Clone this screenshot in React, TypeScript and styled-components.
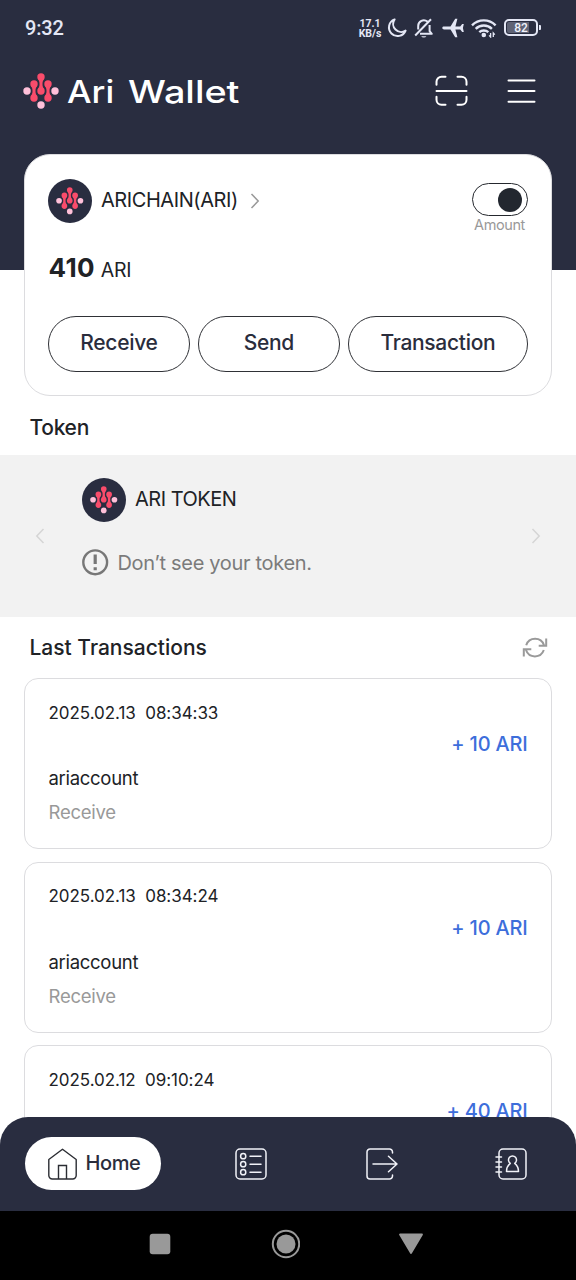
import React from 'react';
import styled, { createGlobalStyle } from 'styled-components';

const GlobalStyle = createGlobalStyle`
  * { box-sizing: border-box; }
  body { margin: 0; background: #fff; font-family: Inter, 'Liberation Sans', sans-serif; color: #202226; }
  svg { display: block; flex: none; }
`;

const navy = '#292d40';

const Screen = styled.div`
  width: 576px;
  height: 1280px;
  display: flex;
  flex-direction: column;
  overflow: hidden;
  background: #fff;
`;

const Label = styled.span<{ $size: number; $track?: number; $weight?: number; $color?: string; $lh?: number }>`
  display: block;
  white-space: pre;
  font-size: ${(p) => p.$size}px;
  line-height: ${(p) => p.$lh ?? 24}px;
  letter-spacing: ${(p) => p.$track ?? 0}px;
  font-weight: ${(p) => p.$weight ?? 400};
  color: ${(p) => p.$color ?? '#202226'};
`;

const Header = styled.header`
  flex: none;
  height: 270px;
  background: ${navy};
`;

const StatusBar = styled.div`
  height: 56px;
  padding: 0 38px 0 25px;
  display: flex;
  align-items: center;
  justify-content: space-between;
`;

const Clock = styled.span`
  font: 500 20px/24px Roboto, sans-serif;
  letter-spacing: -0.2px;
  color: #e4e7f5;
`;

const NetSpeed = styled.div`
  font: 700 10.5px/10px Roboto, sans-serif;
  color: #e4e7f5;
  width: 22px;
  white-space: nowrap;
  display: flex;
  flex-direction: column;
  align-items: center;
  padding-top: 1px;
`;

const StatusIcons = styled.div`
  display: flex;
  align-items: center;
  color: #e4e7f5;
`;

const Battery = styled.div`
  margin-left: 7px;
  width: 34px;
  height: 17px;
  border: 2px solid #e4e7f5;
  border-radius: 5px;
  padding: 1px;
  display: flex;
  position: relative;
  top: -1px;
  &::after {
    content: '';
    position: absolute;
    right: -5px;
    top: 4px;
    width: 2px;
    height: 5px;
    border-radius: 0 1px 1px 0;
    background: #e4e7f5;
  }
`;

const BatteryLevel = styled.div`
  flex: 1;
  background: linear-gradient(90deg, #5f6375 78%, transparent 78%);
  border-radius: 2px;
  font: 500 12px/12px Roboto, sans-serif;
  color: #f0f2fb;
  text-align: center;
`;

const Brand = styled.div`
  height: 70px;
  padding: 0 40px 0 23px;
  display: flex;
  align-items: center;
`;

const Wordmark = styled.h1`
  margin: 1px 0 0 8px;
  display: flex;
  font-size: 31.5px;
  line-height: 40px;
  font-weight: 500;
  color: #fff;
`;

const WordmarkPart = styled.span<{ $width: number; $stretch: number }>`
  width: ${(p) => p.$width}px;
  white-space: pre;
  transform: scaleX(${(p) => p.$stretch});
  transform-origin: left;
`;

const HeaderActions = styled.div`
  margin-left: auto;
  display: flex;
  align-items: center;
  gap: 39px;
`;

const AccountCard = styled.section`
  flex: none;
  position: relative;
  margin: -116px 24px 0;
  height: 242px;
  padding: 24px 23.500px 0;
  border: 1.4px solid #dcdcdf;
  border-radius: 26px;
  background: #fff;
`;

const AccountRow = styled.div`
  display: flex;
  height: 60px;
  align-items: flex-start;
`;

const AccountName = styled.div`
  display: flex;
  align-items: center;
  height: 44px;
  margin-left: -0.6px;
`;

const AccountTitle = styled.div`
  margin: 0 12px 2px 9px;
`;

const Coin = styled.div`
  width: 44px;
  height: 44px;
  border-radius: 50%;
  background: ${navy};
  display: flex;
  align-items: center;
  justify-content: center;
`;

const ToggleColumn = styled.div`
  margin: 4px 0 0 auto;
  width: 56px;
  display: flex;
  flex-direction: column;
  align-items: center;
`;

const Toggle = styled.div`
  width: 56px;
  height: 33px;
  border: 1.5px solid #25282e;
  border-radius: 17px;
  display: flex;
  align-items: center;
  justify-content: flex-end;
  padding-right: 4.5px;
  &::after {
    content: '';
    width: 24px;
    height: 24px;
    border-radius: 50%;
    background: #22272f;
  }
`;

const Balance = styled.div`
  height: 40px;
  margin-top: 9px;
  display: flex;
  align-items: baseline;
  gap: 6px;
`;

const Actions = styled.div`
  margin: 28px 0 0 -0.6px;
  display: grid;
  grid-template-columns: 142px 142px 180px;
  gap: 8px;
`;

const PillButton = styled.button`
  height: 55.5px;
  padding: 0 0 1.5px;
  border: 1.5px solid #2f3136;
  border-radius: 28px;
  background: #fff;
  display: flex;
  align-items: center;
  justify-content: center;
  font-family: inherit;
`;

const SectionHead = styled.div<{ $height: number; $top: number }>`
  flex: none;
  height: ${(p) => p.$height}px;
  padding: ${(p) => p.$top}px 28px 0 29.5px;
  display: flex;
  align-items: center;
  justify-content: space-between;
`;

const TokenBand = styled.section`
  flex: none;
  height: 162px;
  background: #f2f2f2;
  padding: 0 35px;
  display: flex;
  align-items: center;
`;

const TokenBody = styled.div`
  flex: 1;
  align-self: stretch;
  padding: 23px 0 0 37px;
`;

const TokenName = styled.div`
  padding-bottom: 2px;
`;

const TokenRow = styled.div<{ $gap: number; $mt?: number }>`
  display: flex;
  align-items: center;
  gap: ${(p) => p.$gap}px;
  margin-top: ${(p) => p.$mt ?? 0}px;
`;

const TxViewport = styled.div`
  flex: 1;
  min-height: 0;
  overflow: hidden;
  display: flex;
`;

const TxList = styled.div`
  flex: 1;
  min-height: 0;
  padding: 0 24px;
  display: flex;
  flex-direction: column;
  gap: 12.6px;
`;

const TxCard = styled.article`
  flex: none;
  height: 171px;
  padding: 21.700px 23.500px 0;
  border: 1.4px solid #dcdcdf;
  border-radius: 14px;
`;

const TxAmount = styled.div`
  display: flex;
  justify-content: flex-end;
  margin: 7.500px 0 9.800px;
`;

const TabBar = styled.nav`
  flex: none;
  position: relative;
  margin-top: -28px;
  height: 94px;
  border-radius: 28px 28px 0 0;
  background: ${navy};
  padding: 0 49px 1px 25px;
  display: flex;
  align-items: center;
`;

const TabLink = styled.div<{ $before: number }>`
  margin-left: ${(p) => p.$before}px;
`;

const HomeTab = styled.div`
  width: 136px;
  height: 53px;
  border-radius: 27px;
  background: #fff;
  display: flex;
  align-items: center;
  padding-left: 23px;
`;

const TabName = styled.div`
  margin: 0 0 2px 8.500px;
`;

const SystemBar = styled.div`
  flex: none;
  height: 69px;
  padding: 0 152px 4px 149px;
  background: #000;
  display: flex;
  align-items: center;
  justify-content: space-between;
`;

const neck = (x: number, y: number) =>
  `M${x - 3} ${y + 2.2}c1.2 1.5 1.5 2.8 1.5 4.8s-.3 3.3-1.5 4.8h6c-1.2-1.5-1.5-2.8-1.5-4.8s.3-3.3 1.5-4.8z`;

const AriMark = ({ size }: { size: number }) => (
  <svg width={size} height={size} viewBox="0 0 36 36">
    <g fill="#f94c6b">
      {[[18, 4], [11, 11], [25, 11]].map(([x, y]) => (
        <g key={x}>
          <circle cx={x} cy={y} r="3.7" />
          <path d={neck(x, y)} />
          <circle cx={x} cy={y + 14} r="3.7" />
        </g>
      ))}
    </g>
    <g fill="#ffc0d9">
      <circle cx="4" cy="18" r="3.7" />
      <circle cx="32" cy="18" r="3.7" />
      <circle cx="18" cy="32" r="3.7" />
    </g>
  </svg>
);

const StatusGlyph = styled.svg<{ $before: number }>`
  margin-left: ${(p) => p.$before}px;
`;

const MoonIcon = () => (
  <StatusGlyph $before={6} width="20" height="20" viewBox="0 0 20 20" fill="none" stroke="currentColor" strokeWidth="2" strokeLinejoin="round">
    <path d="M7.6 1.4A8.6 8.6 0 1 0 18.6 12.6 8 8 0 0 1 7.6 1.4z" />
  </StatusGlyph>
);

const BellOffIcon = () => (
  <StatusGlyph $before={7} width="20" height="22" viewBox="0 0 20 22" fill="none" stroke="currentColor" strokeWidth="2" strokeLinejoin="round">
    <path d="M4.2 12.5V9a5.6 5.6 0 0 1 9.200-4.400M15.600 8v6.200l2.200 2.600H6M1.200 18.500L17 2.200" />
    <path d="M7.200 19.200h5.200a2.800 2.200 0 0 1-5.200 0z" fill="currentColor" stroke="none" />
  </StatusGlyph>
);

const PlaneIcon = () => (
  <StatusGlyph $before={8} width="22" height="20" viewBox="0 0 22 20" fill="currentColor">
    <path d="M.3 10c0-.9.8-1.400 1.800-1.400h6.400L13.200.8h2.200l-2 7.800h4.800l2-2.600h1.600L20.900 10l.9 4h-1.600l-2-2.600h-4.800l2 7.800h-2.200l-4.700-7.800H2.100C1.100 11.400.3 10.900.3 10z" />
  </StatusGlyph>
);

const WifiIcon = () => (
  <StatusGlyph $before={7} width="26" height="20" viewBox="0 0 26 20" fill="none" stroke="currentColor" strokeWidth="2.400">
    <path d="M1 7.300a16.600 16.600 0 0 1 23.600 0M4.700 10.900a11.400 11.400 0 0 1 16.200 0M8.300 14.200a6.600 6.600 0 0 1 9 0" />
    <circle cx="12.800" cy="17" r="2.300" fill="currentColor" stroke="none" />
    <path d="M19.600 15v4l-1.500-1.600M22.300 19v-4l1.500 1.600" strokeWidth="1.300" />
  </StatusGlyph>
);

const ScanIcon = () => (
  <svg width="33" height="32" viewBox="0 0 33 32" fill="none" stroke="#fff" strokeWidth="2" strokeLinecap="round">
    <path d="M1.500 9.800V6.800a5 5 0 0 1 5-5H10.500M22.500 1.800h4a5 5 0 0 1 5 5v3M31.500 21.800v3a5 5 0 0 1-5 5h-4M10.500 29.800h-4a5 5 0 0 1-5-5v-3M1.500 16h30" />
  </svg>
);

const MenuIcon = () => (
  <svg width="29" height="26" viewBox="0 0 29 26" stroke="#fff" strokeWidth="2" strokeLinecap="round">
    <path d="M1.500 2.500h26M1.500 13h26M1.500 23.700h26" />
  </svg>
);

const Chevron = ({ left, color }: { left?: boolean; color: string }) => (
  <svg width="10" height="16" viewBox="0 0 10 16" fill="none" stroke={color} strokeWidth="1.5">
    <path d={left ? 'M8.500 1L1.800 8l6.700 7' : 'M1.500 1l6.700 7-6.700 7'} />
  </svg>
);

const AlertIcon = () => (
  <svg width="27" height="27" viewBox="0 0 27 27" fill="none" stroke="#777" strokeWidth="2.400">
    <circle cx="13.200" cy="13.300" r="11.900" />
    <path d="M13.200 5.500v9.500M13.200 18.300v3" strokeWidth="3.200" />
  </svg>
);

const RefreshIcon = () => (
  <svg width="26" height="22" viewBox="0 0 26 22" fill="none" stroke="#9a9a9a" strokeWidth="2">
    <path d="M4.200 8.200A9.400 9.400 0 0 1 22 8.200M24.200 1.500v7.200h-7.500M21.800 13A9.400 9.400 0 0 1 4 13M1.800 19.500v-7.200h7.500" />
  </svg>
);

const HomeIcon = () => (
  <svg width="29" height="32" viewBox="0 0 29 32" fill="none" stroke="#2b2d33" strokeWidth="1.400" strokeLinejoin="round">
    <path d="M.8 11.500L14.500 1.200l13.700 10.300V27.500a3.500 3.500 0 0 1-3.500 3.500H4.300a3.500 3.500 0 0 1-3.500-3.500z" />
    <path d="M10.500 31V17.500h8V31" strokeLinejoin="miter" />
  </svg>
);

const ListIcon = () => (
  <svg width="32" height="32" viewBox="0 0 32 32" fill="none" stroke="#f1f2f8" strokeWidth="1.500" strokeLinecap="round">
    <rect x="1" y="1" width="30" height="30" rx="4" />
    {[8.2, 16.2, 24.2].map((y) => (
      <g key={y}>
        <circle cx="8.200" cy={y} r="2.600" />
        <path d={`M15 ${y}h11`} />
      </g>
    ))}
  </svg>
);

const ExportIcon = () => (
  <svg width="32" height="32" viewBox="0 0 32 32" fill="none" stroke="#f1f2f8" strokeWidth="1.500" strokeLinecap="round" strokeLinejoin="round">
    <path d="M26.500 5V4a3 3 0 0 0-3-3H4a3 3 0 0 0-3 3v24a3 3 0 0 0 3 3h19.500a3 3 0 0 0 3-3v-1M7 16h24M22.500 8.300L31 16l-8.500 7.700" />
  </svg>
);

const ContactsIcon = () => (
  <svg width="32" height="32" viewBox="0 0 32 32" fill="none" stroke="#f1f2f8" strokeWidth="1.500" strokeLinecap="round" strokeLinejoin="round">
    <rect x="4" y="1" width="27" height="30" rx="4" />
    <path d="M1 9h5.500M1 14h5.500M1 19h5.500M1 24h5.500" />
    <path d="M11.500 23.500c0-4 1.300-6.200 3.800-8.200a4 4 0 1 1 4.400 0c2.500 2 3.800 4.200 3.800 8.200z" />
  </svg>
);

type Transaction = { date: string; amount: string; account?: string; kind?: string };

const transactions: Transaction[] = [
  { date: '2025.02.13  08:34:33', amount: '+ 10 ARI', account: 'ariaccount', kind: 'Receive' },
  { date: '2025.02.13  08:34:24', amount: '+ 10 ARI', account: 'ariaccount', kind: 'Receive' },
  { date: '2025.02.12  09:10:24', amount: '+ 40 ARI' },
];

export default function App() {
  return (
    <Screen>
      <GlobalStyle />
      <Header>
        <StatusBar>
          <Clock>9:32</Clock>
          <StatusIcons>
            <NetSpeed>
              <span>17.1</span>
              <span>KB/s</span>
            </NetSpeed>
            <MoonIcon />
            <BellOffIcon />
            <PlaneIcon />
            <WifiIcon />
            <Battery>
              <BatteryLevel>82</BatteryLevel>
            </Battery>
          </StatusIcons>
        </StatusBar>
        <Brand>
          <AriMark size={36} />
          <Wordmark>
            <WordmarkPart $width={61} $stretch={1.1}>Ari </WordmarkPart>
            <WordmarkPart $width={110} $stretch={1.2}>Wallet</WordmarkPart>
          </Wordmark>
          <HeaderActions>
            <ScanIcon />
            <MenuIcon />
          </HeaderActions>
        </Brand>
      </Header>

      <AccountCard>
        <AccountRow>
          <AccountName>
            <Coin><AriMark size={27.5} /></Coin>
            <AccountTitle>
              <Label $size={20} $track={-0.42}>ARICHAIN(ARI)</Label>
            </AccountTitle>
            <Chevron color="#999" />
          </AccountName>
          <ToggleColumn>
            <Toggle />
            <Label $size={14.5} $lh={18} $track={-0.4} $color="#999">Amount</Label>
          </ToggleColumn>
        </AccountRow>
        <Balance>
          <Label $size={26} $lh={40} $weight={700} $track={0.3}>410</Label>
          <Label $size={19.5} $lh={40} $track={-0.3}>ARI</Label>
        </Balance>
        <Actions>
          {['Receive', 'Send', 'Transaction'].map((name) => (
            <PillButton key={name}>
              <Label $size={21} $track={-0.3} $weight={450} $color="#2a2d3c">{name}</Label>
            </PillButton>
          ))}
        </Actions>
      </AccountCard>

      <SectionHead $height={59} $top={5}>
        <Label $size={21} $track={-0.3} $weight={450}>Token</Label>
      </SectionHead>
      <TokenBand>
        <Chevron left color="#d5d5d5" />
        <TokenBody>
          <TokenRow $gap={9}>
            <Coin><AriMark size={27.5} /></Coin>
            <TokenName>
              <Label $size={20} $track={-0.5}>ARI TOKEN</Label>
            </TokenName>
          </TokenRow>
          <TokenRow $gap={8.5} $mt={27}>
            <AlertIcon />
            <Label $size={20} $track={-0.32} $color="#7b7b7b">Don’t see your token.</Label>
          </TokenRow>
        </TokenBody>
        <Chevron color="#d5d5d5" />
      </TokenBand>

      <SectionHead $height={61} $top={0}>
        <Label $size={21} $track={0} $weight={450}>Last Transactions</Label>
        <RefreshIcon />
      </SectionHead>
      <TxViewport>
        <TxList>
          {transactions.map((tx) => (
            <TxCard key={tx.date}>
              <Label $size={17} $track={-0.05}>{tx.date}</Label>
              <TxAmount>
                <Label $size={20} $track={-0.2} $weight={500} $color="#3d6edb">{tx.amount}</Label>
              </TxAmount>
              {tx.account && <Label $size={18.5} $track={-0.3}>{tx.account}</Label>}
              {tx.kind && <Label $size={18.5} $track={-0.25} $lh={44} $color="#999">{tx.kind}</Label>}
            </TxCard>
          ))}
        </TxList>
      </TxViewport>

      <TabBar>
        <HomeTab>
          <HomeIcon />
          <TabName>
            <Label $size={20} $track={-0.4} $weight={450} $color="#2a2d3c">Home</Label>
          </TabName>
        </HomeTab>
        <TabLink $before={74}><ListIcon /></TabLink>
        <TabLink $before={99}><ExportIcon /></TabLink>
        <TabLink $before={97}><ContactsIcon /></TabLink>
      </TabBar>
      <SystemBar>
        <svg width="22" height="22" viewBox="0 0 22 22"><rect x=".7" y=".7" width="20.600" height="20.600" rx="3" fill="#999" /></svg>
        <svg width="30" height="30" viewBox="0 0 30 30"><circle cx="16" cy="15" r="13.200" fill="none" stroke="#999" strokeWidth="2" /><circle cx="16" cy="15" r="9.500" fill="#999" /></svg>
        <svg width="26" height="22" viewBox="0 0 26 22"><path d="M2 1.500h22L13 20z" fill="#999" stroke="#999" strokeWidth="1.800" strokeLinejoin="round" /></svg>
      </SystemBar>
    </Screen>
  );
}
